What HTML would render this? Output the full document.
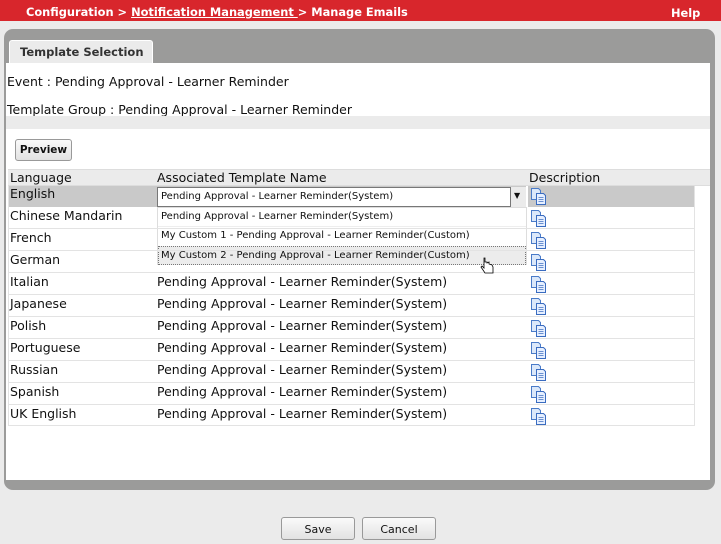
<!DOCTYPE html>
<html><head><style>
*{margin:0;padding:0;box-sizing:border-box}
body{width:721px;height:544px;background:#ebebeb;font-family:Tahoma,"DejaVu Sans","Liberation Sans",sans-serif;font-size:12.5px;color:#111;position:relative;overflow:hidden}
.top{position:absolute;left:0;top:0;width:721px;height:21px;background:#d8262c;color:#fff;font-weight:bold;font-size:11.4px}
.top .bc{position:absolute;left:26px;top:5px;white-space:nowrap}
.top .bc u{text-decoration:underline}
.top .help{position:absolute;left:671px;top:6px}
.panel{position:absolute;left:4px;top:29px;width:711px;height:461px;background:#9b9b9a;border-radius:9px}
.tab{position:absolute;left:9px;top:40px;width:144px;height:24px;background:#ebebeb;border:1px solid #fff;border-bottom:none;border-radius:3px 3px 0 0;font-weight:bold;font-size:11.5px;color:#333;padding:4px 0 0 10px;white-space:nowrap}
.content{position:absolute;left:6px;top:63px;width:704px;height:417px;background:#fff}
.t{position:absolute;white-space:nowrap}
.band{position:absolute;left:6px;top:116px;width:704px;height:13px;background:#ebebeb}
.btn{position:absolute;border:1px solid #999;border-radius:3px;background:linear-gradient(#fafafa,#e2e2e2);font-size:11px;text-align:center}
.row{position:absolute;left:8px;width:686px;height:22px;border-bottom:1px solid #e3e3e3}
.dd{font-size:10px}
</style></head><body>
<div class="top"><span class="bc">Configuration &gt; <u>Notification Management </u>&gt; Manage Emails</span><span class="help">Help</span></div>
<div class="panel"></div>
<div class="tab">Template Selection</div>
<div class="content"></div>
<div class="t" style="left:7px;top:74px">Event : Pending Approval - Learner Reminder</div>
<div class="t" style="left:7px;top:102px">Template Group : Pending Approval - Learner Reminder</div>
<div class="band"></div>
<div class="btn" style="left:15px;top:139px;width:57px;height:22px;font-weight:bold;font-size:10.5px;padding-top:4px">Preview</div>
<div style="position:absolute;left:8px;top:169px;width:702px;height:17px;background:#ebebeb;border-top:1px solid #ddd;border-bottom:1px solid #ddd"></div>
<div class="t" style="left:10px;top:170px">Language</div>
<div class="t" style="left:157px;top:170px">Associated Template Name</div>
<div class="t" style="left:529px;top:170px">Description</div>
<div class="row" style="top:186px;height:21px;background:#c9c9c9;border:none"></div>
<div style="position:absolute;left:526px;top:186px;width:2px;height:21px;background:#fff"></div>
<div class="t" style="left:10px;top:186px">English</div>
<div class="dd" style="position:absolute;left:157px;top:187px;width:354px;height:20px;background:#fff;border:1px solid #777;padding:3px 0 0 3px">Pending Approval - Learner Reminder(System)</div>
<div style="position:absolute;left:511px;top:187px;width:15px;height:20px;background:#ebebeb;font-size:8px;padding:4px 0 0 3px">&#9660;</div>
<div class="dd" style="position:absolute;left:157px;top:207px;width:370px;height:58px;background:#fff;border:1px solid #ddd">
<div style="height:19px;padding:3px 0 0 3px;border-bottom:1px solid #eee">Pending Approval - Learner Reminder(System)</div>
<div style="height:19px;padding:3px 0 0 3px">My Custom 1 - Pending Approval - Learner Reminder(Custom)</div>
<div style="height:19px;padding:3px 0 0 2px;background:#ececec;border:1px dotted #777">My Custom 2 - Pending Approval - Learner Reminder(Custom)</div>
</div>
<div class="row" style="top:207px"></div><div class="t" style="left:10px;top:208px">Chinese Mandarin</div>
<div class="row" style="top:229px"></div><div class="t" style="left:10px;top:230px">French</div>
<div class="row" style="top:251px"></div><div class="t" style="left:10px;top:252px">German</div>
<div class="row" style="top:273px"></div><div class="t" style="left:10px;top:274px">Italian</div><div class="t" style="left:157px;top:274px">Pending Approval - Learner Reminder(System)</div>
<div class="row" style="top:295px"></div><div class="t" style="left:10px;top:296px">Japanese</div><div class="t" style="left:157px;top:296px">Pending Approval - Learner Reminder(System)</div>
<div class="row" style="top:317px"></div><div class="t" style="left:10px;top:318px">Polish</div><div class="t" style="left:157px;top:318px">Pending Approval - Learner Reminder(System)</div>
<div class="row" style="top:339px"></div><div class="t" style="left:10px;top:340px">Portuguese</div><div class="t" style="left:157px;top:340px">Pending Approval - Learner Reminder(System)</div>
<div class="row" style="top:361px"></div><div class="t" style="left:10px;top:362px">Russian</div><div class="t" style="left:157px;top:362px">Pending Approval - Learner Reminder(System)</div>
<div class="row" style="top:383px"></div><div class="t" style="left:10px;top:384px">Spanish</div><div class="t" style="left:157px;top:384px">Pending Approval - Learner Reminder(System)</div>
<div class="row" style="top:405px;height:21px"></div><div class="t" style="left:10px;top:406px">UK English</div><div class="t" style="left:157px;top:406px">Pending Approval - Learner Reminder(System)</div>
<div style="position:absolute;left:8px;top:186px;width:1px;height:240px;background:#e3e3e3"></div>
<div style="position:absolute;left:694px;top:186px;width:1px;height:240px;background:#e3e3e3"></div>
<svg style="position:absolute;left:0;top:0" width="721" height="544">
<defs><g id="d"><path d="M0.5 0.5h7l2 2v9h-9z" fill="#dbe8fa" stroke="#4a7bc8"/><path d="M5.5 5.5h7l2 2v9h-9z" fill="#e6efff" stroke="#3a6cc0"/><path d="M7.5 9.5h5M7.5 11.5h5M7.5 13.5h5" stroke="#6a90d0"/></g></defs>
<use href="#d" x="531" y="188"/><use href="#d" x="531" y="210"/><use href="#d" x="531" y="232"/><use href="#d" x="531" y="254"/>
<use href="#d" x="531" y="276"/><use href="#d" x="531" y="298"/><use href="#d" x="531" y="320"/><use href="#d" x="531" y="342"/>
<use href="#d" x="531" y="364"/><use href="#d" x="531" y="386"/><use href="#d" x="531" y="408"/>
<path d="M484 258v10l-2-2-1 1 4 6h8v-6l-1-2-3-1v-2l-2 1v-1h-2v-4z" fill="#fff" stroke="#000" stroke-width="0.8"/>
</svg>
<div class="btn" style="left:281px;top:517px;width:74px;height:23px;padding-top:5px">Save</div>
<div class="btn" style="left:362px;top:517px;width:74px;height:23px;padding-top:5px">Cancel</div>
</body></html>
